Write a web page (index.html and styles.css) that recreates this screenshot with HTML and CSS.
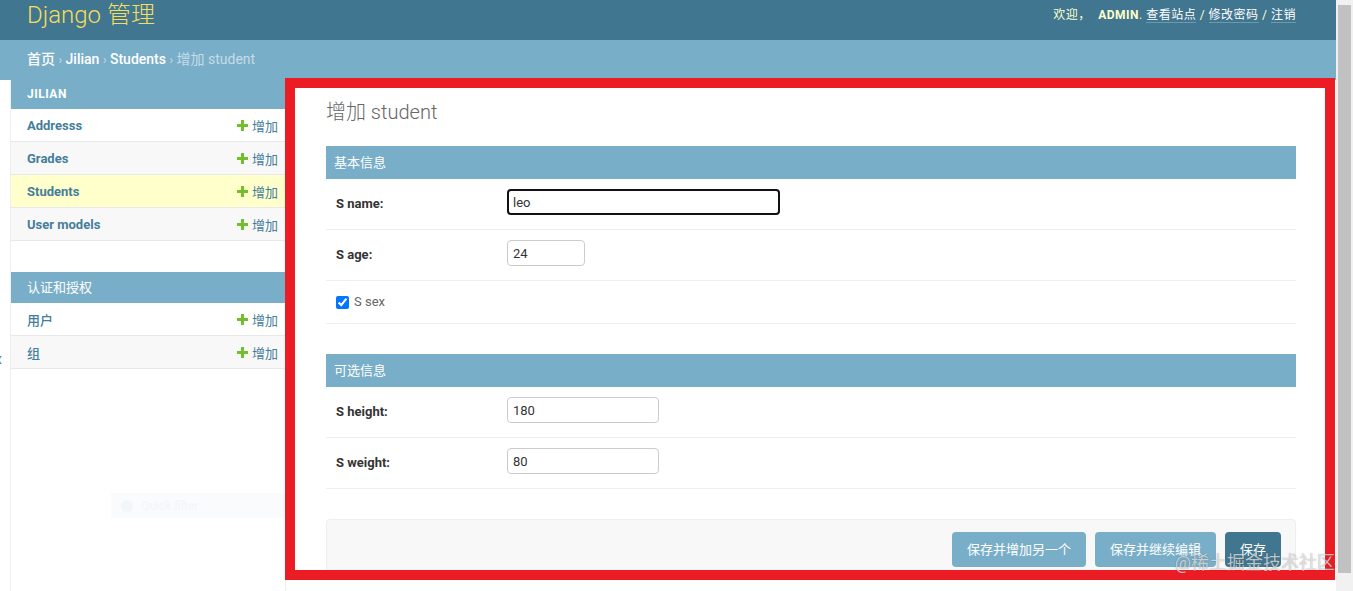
FILE: index.html
```html
<!DOCTYPE html>
<html lang="zh-CN">
<head>
    <meta charset="UTF-8">
    <meta name="viewport" content="width=device-width, initial-scale=1.0">
    <title>增加 student | Django 站点管理员</title>
    <link rel="stylesheet" href="styles.css">
</head>
<body>

<div class="window">
    <div class="page">
        <header class="header">
            <div class="branding">Django 管理</div>
            <div class="user-tools">
                欢迎， <strong>ADMIN</strong>.
                <a href="#">查看站点</a> /
                <a href="#">修改密码</a> /
                <a href="#">注销</a>
            </div>
        </header>

        <div class="breadcrumbs">
            <a href="#">首页</a> <span class="sep">›</span>
            <a href="#">Jilian</a> <span class="sep">›</span>
            <a href="#">Students</a> <span class="sep">›</span>
            增加 student
        </div>

        <div class="main">
            <div class="nav-toggle"><span>«</span></div>

            <nav class="sidebar">
                <div class="module">
                    <div class="caption">Jilian</div>
                    <div class="nav-row">
                        <a class="nav-link" href="#">Addresss</a>
                        <a class="addlink" href="#"><svg width="11" height="11" viewBox="0 0 11 11"><rect x="4" y="0" width="3" height="11" fill="#70bf2b"/><rect x="0" y="4" width="11" height="3" fill="#70bf2b"/></svg>增加</a>
                    </div>
                    <div class="nav-row row-alt">
                        <a class="nav-link" href="#">Grades</a>
                        <a class="addlink" href="#"><svg width="11" height="11" viewBox="0 0 11 11"><rect x="4" y="0" width="3" height="11" fill="#70bf2b"/><rect x="0" y="4" width="11" height="3" fill="#70bf2b"/></svg>增加</a>
                    </div>
                    <div class="nav-row current">
                        <a class="nav-link" href="#">Students</a>
                        <a class="addlink" href="#"><svg width="11" height="11" viewBox="0 0 11 11"><rect x="4" y="0" width="3" height="11" fill="#70bf2b"/><rect x="0" y="4" width="11" height="3" fill="#70bf2b"/></svg>增加</a>
                    </div>
                    <div class="nav-row row-alt">
                        <a class="nav-link" href="#">User models</a>
                        <a class="addlink" href="#"><svg width="11" height="11" viewBox="0 0 11 11"><rect x="4" y="0" width="3" height="11" fill="#70bf2b"/><rect x="0" y="4" width="11" height="3" fill="#70bf2b"/></svg>增加</a>
                    </div>
                </div>

                <div class="module">
                    <div class="caption caption-cjk">认证和授权</div>
                    <div class="nav-row">
                        <a class="nav-link nav-link-cjk" href="#">用户</a>
                        <a class="addlink" href="#"><svg width="11" height="11" viewBox="0 0 11 11"><rect x="4" y="0" width="3" height="11" fill="#70bf2b"/><rect x="0" y="4" width="11" height="3" fill="#70bf2b"/></svg>增加</a>
                    </div>
                    <div class="nav-row row-alt">
                        <a class="nav-link nav-link-cjk" href="#">组</a>
                        <a class="addlink" href="#"><svg width="11" height="11" viewBox="0 0 11 11"><rect x="4" y="0" width="3" height="11" fill="#70bf2b"/><rect x="0" y="4" width="11" height="3" fill="#70bf2b"/></svg>增加</a>
                    </div>
                </div>

                <div class="sidebar-ghost"><span class="ghost-dot"></span><span class="ghost-text">Quick filter</span></div>
            </nav>

            <div class="content">
                <h1>增加 student</h1>
                <form>
                    <fieldset class="form-module">
                        <h2>基本信息</h2>
                        <div class="form-row">
                            <label for="s_name">S name:</label>
                            <input class="input input-long is-focused" id="s_name" type="text" value="leo">
                        </div>
                        <div class="form-row">
                            <label for="s_age">S age:</label>
                            <input class="input input-short" id="s_age" type="text" value="24">
                        </div>
                        <div class="form-row checkbox-row">
                            <input type="checkbox" id="s_sex" checked>
                            <label class="vcheckbox" for="s_sex">S sex</label>
                        </div>
                    </fieldset>

                    <fieldset class="form-module">
                        <h2>可选信息</h2>
                        <div class="form-row">
                            <label for="s_height">S height:</label>
                            <input class="input input-mid" id="s_height" type="text" value="180">
                        </div>
                        <div class="form-row">
                            <label for="s_weight">S weight:</label>
                            <input class="input input-mid" id="s_weight" type="text" value="80">
                        </div>
                    </fieldset>

                    <div class="submit-row">
                        <button type="button">保存并增加另一个</button>
                        <button type="button">保存并继续编辑</button>
                        <button type="button" class="default">保存</button>
                    </div>
                </form>
            </div>
        </div>

        <div class="highlight"></div>
        <div class="watermark">@稀土掘金技术社区</div>
    </div>

    <div class="scrollbar"><div class="thumb"></div></div>
</div>

</body>
</html>
```

FILE: styles.css
```css
* {
    box-sizing: border-box;
}

html, body {
    margin: 0;
    height: 100%;
}

body {
    font-family: Roboto, "Noto Sans CJK SC", sans-serif;
    font-size: 14px;
    color: #333;
    background: #fff;
    overflow: hidden;
}

a {
    text-decoration: none;
}

.window {
    display: flex;
    height: 100vh;
}

.page {
    flex: 1;
    position: relative;
    display: flex;
    flex-direction: column;
    overflow: hidden;
}

/* fake browser scrollbar */
.scrollbar {
    width: 17px;
    background: #f1f1f1;
    padding: 5px 2px 18px;
}

.thumb {
    height: 100%;
    background: #c1c1c1;
}

/* header */
.header {
    flex: none;
    height: 40px;
    background: #417690;
    display: flex;
    justify-content: space-between;
    padding: 0 40px 0 27px;
}

.branding {
    font-size: 24px;
    font-weight: 300;
    line-height: 28px;
    padding-top: 1px;
    color: #f5dd5d;
}

.user-tools {
    font-size: 12px;
    line-height: 14px;
    padding-top: 8px;
    letter-spacing: 0.5px;
    color: #ffc;
}

.user-tools strong {
    font-weight: 700;
    margin-left: 4px;
}

.user-tools a {
    color: #fff;
    border-bottom: 1px solid rgba(255, 255, 255, 0.25);
}

.breadcrumbs {
    flex: none;
    background: #79aec8;
    padding: 10px 27px;
    font-size: 14px;
    line-height: 19px;
    color: #c4dce8;
}

.breadcrumbs a {
    color: #fff;
    font-weight: 500;
}

.breadcrumbs .sep {
    font-size: 12px;
}

/* body */
.main {
    flex: 1 0 auto;
    display: flex;
}

.nav-toggle {
    width: 11px;
    border-right: 1px solid #eee;
    overflow: hidden;
    color: #447e9b;
    font-size: 20px;
    line-height: 20px;
    padding-top: 269px;
}

.nav-toggle span {
    display: block;
    margin-left: -7px;
}

.sidebar {
    width: 275px;
    border-right: 1px solid #eee;
}

.module {
    margin-bottom: 31px;
}

.caption {
    background: #79aec8;
    color: #fff;
    padding: 8px 16px;
    font-size: 12px;
    font-weight: 700;
    line-height: 13px;
    letter-spacing: 0.5px;
    text-transform: uppercase;
}

.caption-cjk {
    font-size: 13px;
    font-weight: 400;
    line-height: 15px;
    letter-spacing: 0;
}

.nav-row {
    height: 33px;
    display: flex;
    justify-content: space-between;
    align-items: center;
    padding: 0 7px 0 16px;
    border-bottom: 1px solid #e8e8e8;
    background: #fff;
}

.nav-row.row-alt {
    background: #f8f8f8;
}

.nav-row.current {
    background: #ffc;
}

.nav-link {
    color: #447e9b;
    font-size: 13px;
    font-weight: 700;
}

.nav-link-cjk {
    font-weight: 500;
}

.addlink {
    display: flex;
    align-items: center;
    gap: 4px;
    color: #447e9b;
    font-size: 13px;
}

.sidebar-ghost {
    margin: 124px 0 0 100px;
    height: 25px;
    background: #f9fbfd;
    display: flex;
    align-items: center;
    gap: 8px;
    padding-left: 10px;
}

.ghost-dot {
    width: 12px;
    height: 12px;
    border-radius: 50%;
    background: #f1f6fa;
}

.ghost-text {
    font-size: 12px;
    color: #f2f6f9;
}

/* content */
.content {
    flex: 1;
    padding: 20px 40px;
}

.content h1 {
    margin: 0 0 22px;
    font-size: 20px;
    font-weight: 300;
    line-height: 24px;
    color: #666;
}

.form-module {
    border: none;
    margin: 0 0 30px;
    padding: 0;
    min-width: 0;
}

.form-module h2 {
    margin: 0;
    background: #79aec8;
    color: #fff;
    font-size: 13px;
    font-weight: 400;
    line-height: 17px;
    padding: 8px;
}

.form-row {
    height: 51px;
    display: flex;
    align-items: flex-start;
    padding: 10px 10px 0;
    border-bottom: 1px solid #eee;
}

.form-row label {
    width: 171px;
    font-size: 13px;
    font-weight: 700;
    line-height: 26px;
    margin-top: 2px;
    color: #333;
}

.checkbox-row {
    height: 43px;
    align-items: center;
    padding-top: 0;
}

.checkbox-row input {
    width: 13px;
    height: 13px;
    margin: 0 5px 0 0;
}

.form-row .vcheckbox {
    width: auto;
    font-weight: 400;
    color: #666;
    margin-top: 0;
}

.input {
    height: 26px;
    border: 1px solid #ccc;
    border-radius: 4px;
    padding: 0 5px;
    font-family: inherit;
    font-size: 13px;
    color: #333;
    background: #fff;
}

.input.is-focused {
    border: 2px solid #111;
    padding: 0 4px;
    outline: none;
}

.input-long {
    width: 273px;
}

.input-short {
    width: 78px;
}

.input-mid {
    width: 152px;
}

.submit-row {
    display: flex;
    justify-content: flex-end;
    gap: 9px;
    padding: 12px 14px;
    background: #f8f8f8;
    border: 1px solid #eee;
    border-radius: 4px;
}

.submit-row button {
    border: none;
    border-radius: 4px;
    background: #79aec8;
    color: #fff;
    font-family: inherit;
    font-size: 13px;
    line-height: 15px;
    padding: 10px 15px;
}

.submit-row button.default {
    background: #417690;
}

/* annotation overlays */
.highlight {
    position: absolute;
    left: 285px;
    top: 78px;
    width: 1050px;
    height: 502px;
    border: 10px solid #ec1c24;
    pointer-events: none;
}

.watermark {
    position: absolute;
    right: 1px;
    top: 552px;
    font-size: 18px;
    line-height: 22px;
    color: rgba(255, 255, 255, 0.7);
    text-shadow: 0 0 1px rgba(0, 0, 0, 0.45);
    pointer-events: none;
}
```
